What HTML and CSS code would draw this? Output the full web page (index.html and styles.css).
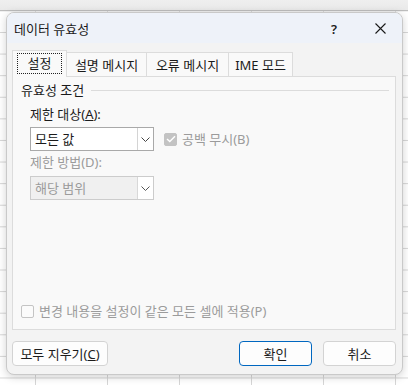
FILE: index.html
```html
<!DOCTYPE html>
<html lang="ko">
<head>
<meta charset="utf-8">
<link rel="stylesheet" href="styles.css">
</head>
<body>
<div class="desk">
  <div class="dialog">
    <div class="titlebar">
      <span class="title">데이터 유효성</span>
      <span class="help">?</span>
      <svg class="close" width="11" height="11" viewBox="0 0 11 11"><path d="M0.5 0.5 L10.5 10.5 M10.5 0.5 L0.5 10.5" stroke="#1a1a1a" stroke-width="1.1" fill="none"/></svg>
    </div>
    <div class="body">
      <div class="tabs">
        <div class="tab active"><span class="focus">설정</span></div>
        <div class="tab t2">설명 메시지</div>
        <div class="tab t3">오류 메시지</div>
        <div class="tab t4">IME 모드</div>
      </div>
      <div class="panel">
        <div class="group-title"><span>유효성 조건</span><span class="rule"></span></div>
        <div class="label">제한 대상(<u>A</u>):</div>
        <div class="row">
          <div class="combo">
            <span class="value">모든 값</span>
            <span class="drop"><svg width="9" height="5" viewBox="0 0 9 5"><path d="M0.5 0.5 L4.5 4.5 L8.5 0.5" stroke="#444" fill="none"/></svg></span>
          </div>
          <label class="check disabled">
            <span class="box checked"><svg width="10" height="8" viewBox="0 0 10 8"><path d="M1 4 L3.8 6.6 L9 1.2" stroke="#fff" stroke-width="1.4" fill="none"/></svg></span>
            <span>공백 무시(B)</span>
          </label>
        </div>
        <div class="label disabled l2">제한 방법(D):</div>
        <div class="combo off">
          <span class="value">해당 범위</span>
          <span class="drop"><svg width="9" height="5" viewBox="0 0 9 5"><path d="M0.5 0.5 L4.5 4.5 L8.5 0.5" stroke="#555" fill="none"/></svg></span>
        </div>
        <div class="spacer"></div>
        <label class="check disabled bottom">
          <span class="box"></span>
          <span>변경 내용을 설정이 같은 모든 셀에 적용(P)</span>
        </label>
      </div>
      <div class="buttons">
        <button class="btn clear">모두 지우기(<u>C</u>)</button>
        <span class="grow"></span>
        <button class="btn ok">확인</button>
        <button class="btn cancel">취소</button>
      </div>
    </div>
  </div>
</div>
</body>
</html>
```

FILE: styles.css
```css
html, body {
  margin: 0;
  padding: 0;
}
body {
  width: 408px;
  height: 385px;
  overflow: hidden;
  font-family: "Noto Sans", "Noto Sans CJK KR", sans-serif;
  font-size: 13px;
  color: #1b1b1b;
}
.desk {
  width: 408px;
  height: 385px;
  box-sizing: border-box;
  padding: 12px 5px 0 6px;
  background-color: #ffffff;
  background-image:
    linear-gradient(to bottom, #efefef 0, #e9e9e9 10px, #bdbdbd 10px, #bdbdbd 11px, transparent 11px),
    repeating-linear-gradient(to right, transparent 0, transparent 35px, #d6d6d6 35px, #d6d6d6 36px, transparent 36px, transparent 72px),
    linear-gradient(to bottom, #d6d6d6 0, #d6d6d6 1px, transparent 1px);
  background-size: 408px 11px, 72px 385px, 408px 21.6px;
  background-repeat: no-repeat, repeat-x, repeat-y;
  background-position: 0 0, 0 0, 0 10.4px;
}
.dialog {
  width: 397px;
  height: 363px;
  background: #f3f3f3;
  border: 1px solid #c9c9c9;
  box-sizing: border-box;
  border-radius: 8px;
  box-shadow: 0 2px 8px rgba(0,0,0,0.18);
  overflow: hidden;
  display: flex;
  flex-direction: column;
}
.titlebar {
  height: 30px;
  flex: none;
  background: #eef2f9;
  display: flex;
  align-items: center;
  padding-left: 7px;
}
.title {
  line-height: 16px;
  padding-top: 1px;
}
.help {
  margin-left: auto;
  font-size: 13px;
  font-weight: 600;
  line-height: 16px;
  margin-right: 38px;
  padding-top: 1px;
}
.close {
  margin-right: 16px;
  margin-top: 1px;
}
.body {
  flex: 1;
  display: flex;
  flex-direction: column;
  padding: 9px 6px 8px 5px;
}
.tabs {
  display: flex;
  height: 24px;
  align-items: flex-end;
  position: relative;
  z-index: 1;
}
.tab {
  height: 24px;
  box-sizing: border-box;
  border: 1px solid #dcdcdc;
  border-bottom: none;
  background: #f9f9f9;
  display: flex;
  align-items: center;
  justify-content: center;
  line-height: 16px;
  margin-left: -1px;
  white-space: nowrap;
}
.tab.active {
  width: 55px;
  height: 27px;
  margin-left: 0;
  margin-bottom: -1px;
  padding-bottom: 2px;
}
.focus {
  outline: 1px dotted #222;
  outline-offset: 0;
  padding: 1px 10px 2px;
  margin-top: 1px;
}
.t2 { width: 81px; }
.t3 { width: 83px; }
.t4 { width: 65px; }
.panel {
  flex: 1;
  background: #f9f9f9;
  border: 1px solid #dcdcdc;
  display: flex;
  flex-direction: column;
  padding: 5px 6px 10px 8px;
}
.group-title {
  display: flex;
  align-items: center;
  line-height: 16px;
}
.rule {
  flex: 1;
  height: 1px;
  background: #dcdcdc;
  margin-left: 7px;
  margin-top: 1px;
}
.label {
  line-height: 16px;
  margin: 8px 0 0 9px;
}
.label.l2 {
  margin-top: 3px;
}
.disabled {
  color: #9b9b9b;
}
.row {
  display: flex;
  align-items: center;
  margin-top: 5px;
}
.combo {
  width: 124px;
  height: 24px;
  box-sizing: border-box;
  border: 1px solid #a9a9a9;
  background: #ffffff;
  display: flex;
  align-items: center;
  margin-left: 9px;
}
.combo.off {
  margin-top: 6px;
  background: #f0f0f0;
  border-color: #cccccc;
  color: #9b9b9b;
}
.value {
  flex: 1;
  padding-left: 4px;
  line-height: 16px;
}
.drop {
  width: 16px;
  height: 22px;
  box-sizing: border-box;
  border-left: 1px solid #d4d4d4;
  display: flex;
  align-items: center;
  justify-content: center;
  background: #ffffff;
}
.combo.off .drop {
  border-left-color: #d8d8d8;
}
.check {
  display: flex;
  align-items: center;
  line-height: 16px;
  white-space: nowrap;
}
.row .check {
  margin-left: 10px;
}
.box {
  width: 13px;
  height: 13px;
  box-sizing: border-box;
  border: 1px solid #c4c4c4;
  border-radius: 2px;
  background: #fbfbfb;
  margin-right: 5px;
  display: flex;
  align-items: center;
  justify-content: center;
}
.box.checked {
  background: #c3c3c3;
  border-color: #c3c3c3;
}
.spacer {
  flex: 1;
}
.buttons {
  display: flex;
  margin-top: 11px;
  height: 25px;
}
.grow { flex: 1; }
.btn {
  font-family: "Noto Sans", "Noto Sans CJK KR", sans-serif;
  font-size: 13px;
  color: #1b1b1b;
  background: #fdfdfd;
  border: 1px solid #d3d3d3;
  border-radius: 4px;
  height: 25px;
  padding: 0;
  line-height: 16px;
  white-space: nowrap;
}
.btn.clear { width: 96px; }
.btn.ok {
  width: 73px;
  border-color: #0067c0;
}
.btn.cancel {
  width: 73px;
  margin-left: 11px;
}
u {
  text-decoration: underline;
  text-underline-offset: 1px;
}
```
